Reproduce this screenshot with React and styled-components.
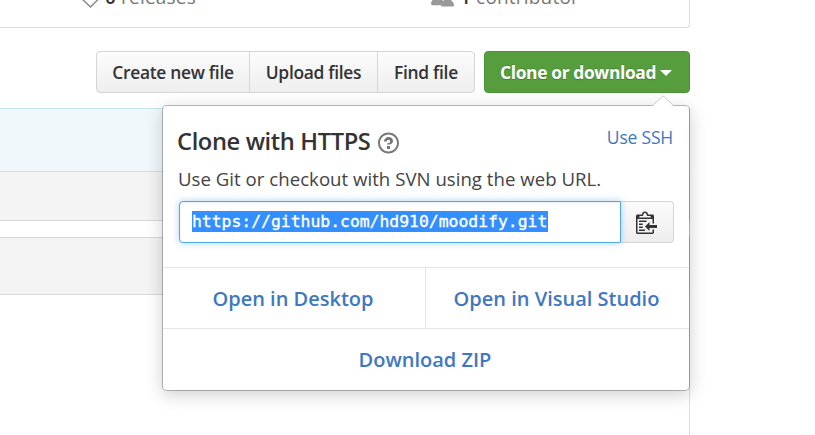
import React from "react";
import styled, { createGlobalStyle } from "styled-components";

const Global = createGlobalStyle`
  *, *::before, *::after { box-sizing: border-box; }
  body { margin: 0; background: #fff; overflow: hidden; }
  svg { display: block; flex: none; }
`;

const Page = styled.main`
  width: 815px;
  height: 435px;
  padding-right: 125px;
  overflow: hidden;
  display: flex;
  flex-direction: column;
  background: #fff;
  color: #333;
  font-family: "Open Sans", "Noto Sans", sans-serif;
`;

const Summary = styled.section`
  flex: none;
  height: 28px;
  display: flex;
  overflow: hidden;
  border: solid #ddd;
  border-width: 0 1.5px 1.5px 0;
  border-bottom-right-radius: 4px;
`;

const Stat = styled.div`
  display: flex;
  align-items: center;
  gap: 6px;
  height: 30px;
  margin: -17px 0 0 ${(p) => p.$offset}px;
  width: ${(p) => p.$width}px;
  color: #777;
  fill: #999;
  font-size: 19px;
  line-height: 28px;
  letter-spacing: 0.2px;
  white-space: nowrap;
`;

const StatText = styled.span`
  margin-top: -3px;
`;

const Count = styled.strong`
  color: #333;
  font-weight: 600;
  margin-right: 5px;
`;

const Toolbar = styled.div`
  flex: none;
  height: 42px;
  margin-top: 23px;
  display: flex;
  justify-content: flex-end;
  gap: 9px;
`;

const ButtonGroup = styled.div`
  display: flex;
  border: 1.5px solid #d5d5d5;
  border-radius: 4px;
  overflow: hidden;
  background: linear-gradient(#fcfcfc, #eee);
`;

const GroupButton = styled.button`
  width: ${(p) => p.$width}px;
  padding: 0;
  border: 0;
  background: none;
  color: #333;
  font: 550 17.4px/40px "Open Sans", "Noto Sans", sans-serif;
  letter-spacing: -0.3px;
  white-space: nowrap;
  & + & { border-left: 1px solid #d5d5d5; }
`;

const CloneButton = styled.button`
  width: 206px;
  padding: 1px 0 0 15px;
  display: flex;
  align-items: center;
  gap: 4px;
  border: 1.5px solid #4a933a;
  border-radius: 4px;
  background: #569e3d;
  color: #fff;
  font: 700 17.4px/39px "Open Sans", "Noto Sans", sans-serif;
  letter-spacing: -0.36px;
  white-space: nowrap;
  text-shadow: 0 -1px 0 rgba(0, 0, 0, 0.15), 0 1px 1px rgba(0, 0, 0, 0.2);
`;

const Caret = styled.span`
  border: 6px solid transparent;
  border-top-color: #fff;
  border-bottom: 0;
`;

const Anchor = styled.div`
  position: relative;
  display: flex;
`;

const Commit = styled.div`
  flex: none;
  height: 64px;
  margin-top: 15px;
  border: solid #c5e2ef;
  border-width: 1px 1px 1px 0;
  background: #f1f8fb;
`;

const Band = styled.div`
  flex: none;
  height: ${(p) => p.$height}px;
  border: solid #d8d8d8;
  border-width: ${(p) => (p.$top ? 1 : 0)}px 1px 1px 0;
  background: #f4f4f4;
  & + & { margin-top: 16px; }
`;

const Readme = styled.div`
  flex: 1;
  border-right: 1.5px solid #ddd;
`;

const Popover = styled.div`
  position: absolute;
  z-index: 1;
  top: 54px;
  right: 0;
  width: 528px;
  height: 286px;
  display: flex;
  flex-direction: column;
  border: 1px solid rgba(0, 0, 0, 0.25);
  border-radius: 5px;
  background: #fff;
  background-clip: padding-box;
  box-shadow: 0 4px 17px rgba(0, 0, 0, 0.19);
`;

const Pointer = styled.svg`
  position: absolute;
  top: -11px;
  right: 14px;
`;

const CloneBody = styled.div`
  height: 161px;
  padding: 15px 16px 0 15px;
`;

const TitleRow = styled.div`
  display: flex;
  height: 42px;
  fill: #777;
`;

const Title = styled.h4`
  width: 194px;
  margin: -1px 6px 0 -1px;
  color: #333;
  font-size: 23.7px;
  font-weight: 550;
  line-height: 42px;
  letter-spacing: -0.38px;
  white-space: nowrap;
`;

const HelpIcon = styled.svg`
  margin: 10px 0 0 1px;
`;

const SwitchLink = styled.a`
  margin-left: auto;
  color: #4078c0;
  font-size: 17.5px;
  line-height: 32px;
  letter-spacing: -0.2px;
`;

const Hint = styled.p`
  margin: 0;
  height: 38px;
  color: #444;
  font-size: 18.6px;
  line-height: 31px;
  letter-spacing: 0.03px;
  white-space: nowrap;
`;

const UrlRow = styled.div`
  display: flex;
  height: 42px;
  margin: 0 -1px 0 1px;
`;

const UrlField = styled.div`
  z-index: 1;
  width: 442px;
  padding: 9px 0 0 12px;
  border: 1.5px solid #51a7e8;
  border-radius: 4px 0 0 4px;
  background: #fff;
  box-shadow: inset 0 1px 2px rgba(0, 0, 0, 0.075), 0 0 7px rgba(81, 167, 232, 0.5);
`;

const Selection = styled.span`
  display: block;
  width: 356px;
  height: 21px;
  background: #338fff;
  color: #fff;
  font: 400 16.4px/22px "DejaVu Sans Mono", "Liberation Mono", monospace;
  -webkit-text-stroke: 0.35px #fff;
  white-space: nowrap;
`;

const CopyButton = styled.button`
  width: 53px;
  padding: 0 1px 1px 0;
  display: grid;
  place-items: center;
  border: 1.5px solid #d5d5d5;
  border-left: 0;
  border-radius: 0 4px 4px 0;
  background: linear-gradient(#fcfcfc, #eee);
  fill: #333;
`;

const Actions = styled.div`
  display: grid;
  grid-template: 61px 61px / 262px 264px;
`;

const Action = styled.a`
  grid-column: ${(p) => (p.$wide ? "1 / 3" : "auto")};
  padding-right: 2px;
  border-top: 1px solid #e5e5e5;
  color: #4078c0;
  font-size: 20px;
  font-weight: 550;
  line-height: 61px;
  text-align: center;
  white-space: nowrap;
  & + &:nth-child(2) { border-left: 1px solid #e5e5e5; }
`;

const QUESTION =
  "M6 10h2v2H6v-2zm4-3.5C10 8.64 8 9 8 9H6c0-.55.45-1 1-1h.5c.28 0 .5-.22.5-.5v-1c0-.28-.22-.5-.5-.5h-1c-.28 0-.5.22-.5.5V7H4c0-1.5 1.5-3 3-3s3 1 3 2.5zM7 2.3c3.14 0 5.7 2.56 5.7 5.7s-2.56 5.7-5.7 5.7A5.71 5.71 0 0 1 1.3 8c0-3.14 2.56-5.7 5.7-5.7zM7 1C3.14 1 0 4.14 0 8s3.14 7 7 7 7-3.14 7-7-3.14-7-7-7z";
const CLIPPY =
  "M2 13h4v1H2v-1zm5-6H2v1h5V7zm2 3V8l-3 3 3 3v-2h5v-2H9zM4.5 9H2v1h2.5V9zM2 12h2.5v-1H2v1zm9 1h1v2c-.02.28-.11.52-.3.7-.19.18-.42.28-.7.3H1c-.55 0-1-.45-1-1V4c0-.55.45-1 1-1h3c0-1.11.89-2 2-2 1.11 0 2 .89 2 2h3c.55 0 1 .45 1 1v5h-1V6H1v9h10v-2zM2 5h8c0-.55-.45-1-1-1H8c-.55 0-1-.45-1-1s-.45-1-1-1-1 .45-1 1-.45 1-1 1H3c-.55 0-1 .45-1 1z";
const PEOPLE =
  "M16 12.999c0 .439-.45 1-1 1H7.995c-.539 0-.994-.447-.995-.999H1c-.54 0-1-.561-1-1 0-2.634 3-4 3-4s.229-.409 0-1c-.841-.621-1.058-.59-1-3 .058-2.419 1.367-3 2.5-3s2.442.58 2.5 3c.058 2.41-.159 2.379-1 3-.229.59 0 1 0 1s1.549.711 2.42 2.088C9.196 9.369 10 8.999 10 8.999s.229-.409 0-1c-.841-.62-1.058-.59-1-3 .058-2.419 1.367-3 2.5-3s2.437.581 2.495 3c.059 2.41-.158 2.38-1 3-.229.59 0 1 0 1s3.005 1.366 3.005 4";

export default function App() {
  return (
    <Page>
      <Global />
      <Summary>
        <Stat $offset={79} $width={352}>
          <svg width="20" height="20" viewBox="0 0 20 20">
            <path d="M1 3v6l10.5 10 7.5-7.5L9 1H3z" fill="none" stroke="#888" strokeWidth="1.4" />
          </svg>
          <StatText><Count>0</Count>releases</StatText>
        </Stat>
        <Stat $offset={0} $width={200}>
          <svg width="23" height="24" viewBox="0 0 16 16"><path d={PEOPLE} /></svg>
          <StatText><Count>1</Count>contributor</StatText>
        </Stat>
      </Summary>
      <Toolbar>
        <ButtonGroup>
          <GroupButton $width={152}>Create new file</GroupButton>
          <GroupButton $width={128}>Upload files</GroupButton>
          <GroupButton $width={97}>Find file</GroupButton>
        </ButtonGroup>
        <Anchor>
          <CloneButton>Clone or download<Caret /></CloneButton>
          <Popover>
            <Pointer width="24" height="12" viewBox="0 0 24 12">
              <path d="M1 12L12 1l11 11z" fill="#fff" />
              <path d="M1 11L12 0.8l11 10.2" fill="none" stroke="#ccc" />
            </Pointer>
            <CloneBody>
              <TitleRow>
                <Title>Clone with HTTPS</Title>
                <HelpIcon width="21" height="24" viewBox="0 0 14 16"><path d={QUESTION} /></HelpIcon>
                <SwitchLink>Use SSH</SwitchLink>
              </TitleRow>
              <Hint>Use Git or checkout with SVN using the web URL.</Hint>
              <UrlRow>
                <UrlField><Selection>https://github.com/hd910/moodify.git</Selection></UrlField>
                <CopyButton aria-label="Copy to clipboard">
                  <svg width="21" height="24" viewBox="0 0 14 16"><path d={CLIPPY} /></svg>
                </CopyButton>
              </UrlRow>
            </CloneBody>
            <Actions>
              <Action>Open in Desktop</Action>
              <Action>Open in Visual Studio</Action>
              <Action $wide>Download ZIP</Action>
            </Actions>
          </Popover>
        </Anchor>
      </Toolbar>
      <Commit />
      <Band $height={49} />
      <Band $top $height={58} />
      <Readme />
    </Page>
  );
}
